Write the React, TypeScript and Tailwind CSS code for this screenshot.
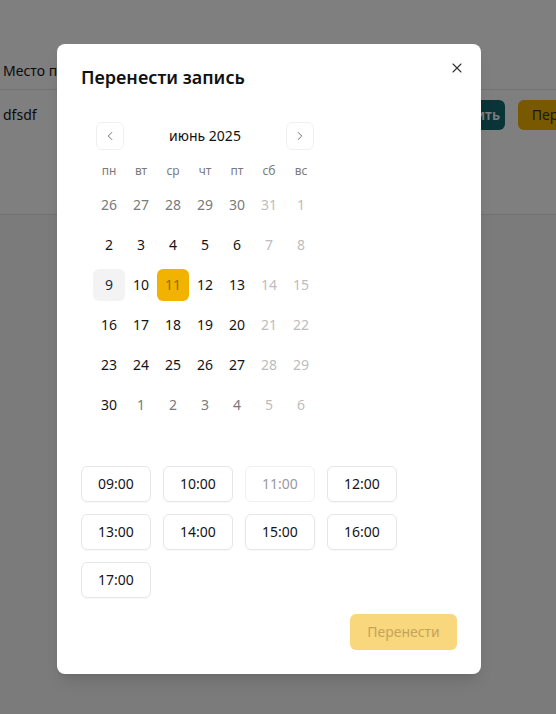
import React from "react";
import { X, ChevronLeft, ChevronRight } from "lucide-react";

type Day = { n: number; kind: "out" | "in" | "outWeekend" | "inWeekend" };

const weeks: Day[][] = (() => {
  const rows: Day[][] = [];
  const first: Day[] = [
    { n: 26, kind: "out" },
    { n: 27, kind: "out" },
    { n: 28, kind: "out" },
    { n: 29, kind: "out" },
    { n: 30, kind: "out" },
    { n: 31, kind: "outWeekend" },
    { n: 1, kind: "inWeekend" },
  ];
  rows.push(first);
  let d = 2;
  for (let w = 0; w < 4; w++) {
    const r: Day[] = [];
    for (let i = 0; i < 7; i++) {
      r.push({ n: d, kind: i >= 5 ? "inWeekend" : "in" });
      d++;
    }
    rows.push(r);
  }
  rows.push([
    { n: 30, kind: "in" },
    { n: 1, kind: "out" },
    { n: 2, kind: "out" },
    { n: 3, kind: "out" },
    { n: 4, kind: "out" },
    { n: 5, kind: "outWeekend" },
    { n: 6, kind: "outWeekend" },
  ]);
  return rows;
})();

const weekdays = ["пн", "вт", "ср", "чт", "пт", "сб", "вс"];
const times = ["09:00", "10:00", "11:00", "12:00", "13:00", "14:00", "15:00", "16:00", "17:00"];

function DayCell({ day, row }: { day: Day; row: number }) {
  const isSelected = row === 2 && day.n === 11;
  const isToday = row === 2 && day.n === 9;
  let cls = "flex h-8 w-8 items-center justify-center rounded-md text-sm ";
  if (isSelected) cls += "bg-[#f1b300] text-[#8f6a00]";
  else if (isToday) cls += "bg-[#f3f3f3] text-[#1f2a44]";
  else if (day.kind === "in") cls += "text-[#141414]";
  else if (day.kind === "out") cls += "text-[#7a7a7a]";
  else cls += "text-[#bdbdbd]";
  return <div className={cls}>{day.n}</div>;
}

export default function App() {
  return (
    <div
      className="relative h-[714px] w-[556px] overflow-hidden bg-[#f6f6f6]"
      style={{ fontFamily: '"Noto Sans", "Open Sans", sans-serif' }}
    >
      {/* background page */}
      <div className="h-[215px] border-b border-[#e2e2e2] bg-white pt-[52px]">
        <div className="flex h-[38px] items-center border-b border-[#e5e5e5] pl-[3px] text-sm text-[#141414]">
          Место проведения
        </div>
        <div className="flex h-[50px] w-[640px] items-center pl-[3px] text-sm text-[#141414]">
          <div className="w-[422px]">dfsdf</div>
          <div className="flex h-[30px] w-[80px] items-center justify-center rounded-md bg-[#146a70] text-sm font-semibold text-white">
            Отменить
          </div>
          <div className="ml-[13px] flex h-[30px] w-[100px] items-center justify-center rounded-md bg-[#f1b300] text-sm text-[#333]">
            Перенести
          </div>
        </div>
      </div>

      {/* overlay */}
      <div className="absolute inset-0 bg-black/50" />

      {/* dialog */}
      <div className="absolute left-[57px] top-[44px] w-[424px] rounded-lg bg-white p-6 shadow-lg">
        <button className="absolute right-4 top-4 flex h-4 w-4 items-center justify-center text-[#333]">
          <X size={16} strokeWidth={1.6} />
        </button>
        <h2 className="-mt-[5px] text-lg font-semibold leading-7 text-[#111]">Перенести запись</h2>

        <div className="mt-[19px] w-[248px] p-3">
          <div className="flex h-7 items-center justify-between px-[3px]">
            <button className="flex h-7 w-7 items-center justify-center rounded-md border border-[#f0f0f0] text-[#666]">
              <ChevronLeft size={14} strokeWidth={1.6} />
            </button>
            <div className="text-sm font-normal text-[#111]">июнь 2025</div>
            <button className="flex h-7 w-7 items-center justify-center rounded-md border border-[#f0f0f0] text-[#666]">
              <ChevronRight size={14} strokeWidth={1.6} />
            </button>
          </div>
          <div className="mt-[11px] grid h-5 grid-cols-7 items-center text-center text-xs text-[#7a7a7a]">
            {weekdays.map((w) => (
              <div key={w}>{w}</div>
            ))}
          </div>
          <div className="mt-2 flex flex-col gap-2">
            {weeks.map((r, ri) => (
              <div key={ri} className="grid grid-cols-7">
                {r.map((d, di) => (
                  <DayCell key={di} day={d} row={ri} />
                ))}
              </div>
            ))}
          </div>
        </div>

        <div className="mt-[33px] grid w-[316px] grid-cols-4 gap-3">
          {times.map((t) => {
            const disabled = t === "11:00";
            return (
              <button
                key={t}
                className={
                  disabled
                    ? "flex h-9 items-center justify-center rounded-md border border-[#f1f1f1] text-sm text-[#9a9a9a]"
                    : "flex h-9 items-center justify-center rounded-md border border-[#e6e6e6] text-sm text-[#141414] shadow-[0_1px_1px_rgba(0,0,0,0.03)]"
                }
              >
                {t}
              </button>
            );
          })}
        </div>

        <div className="mt-4 flex justify-end">
          <button className="flex h-9 w-[107px] items-center justify-center rounded-md bg-[#f8d77d] text-sm text-[#c4a45c]">
            Перенести
          </button>
        </div>
      </div>
    </div>
  );
}
